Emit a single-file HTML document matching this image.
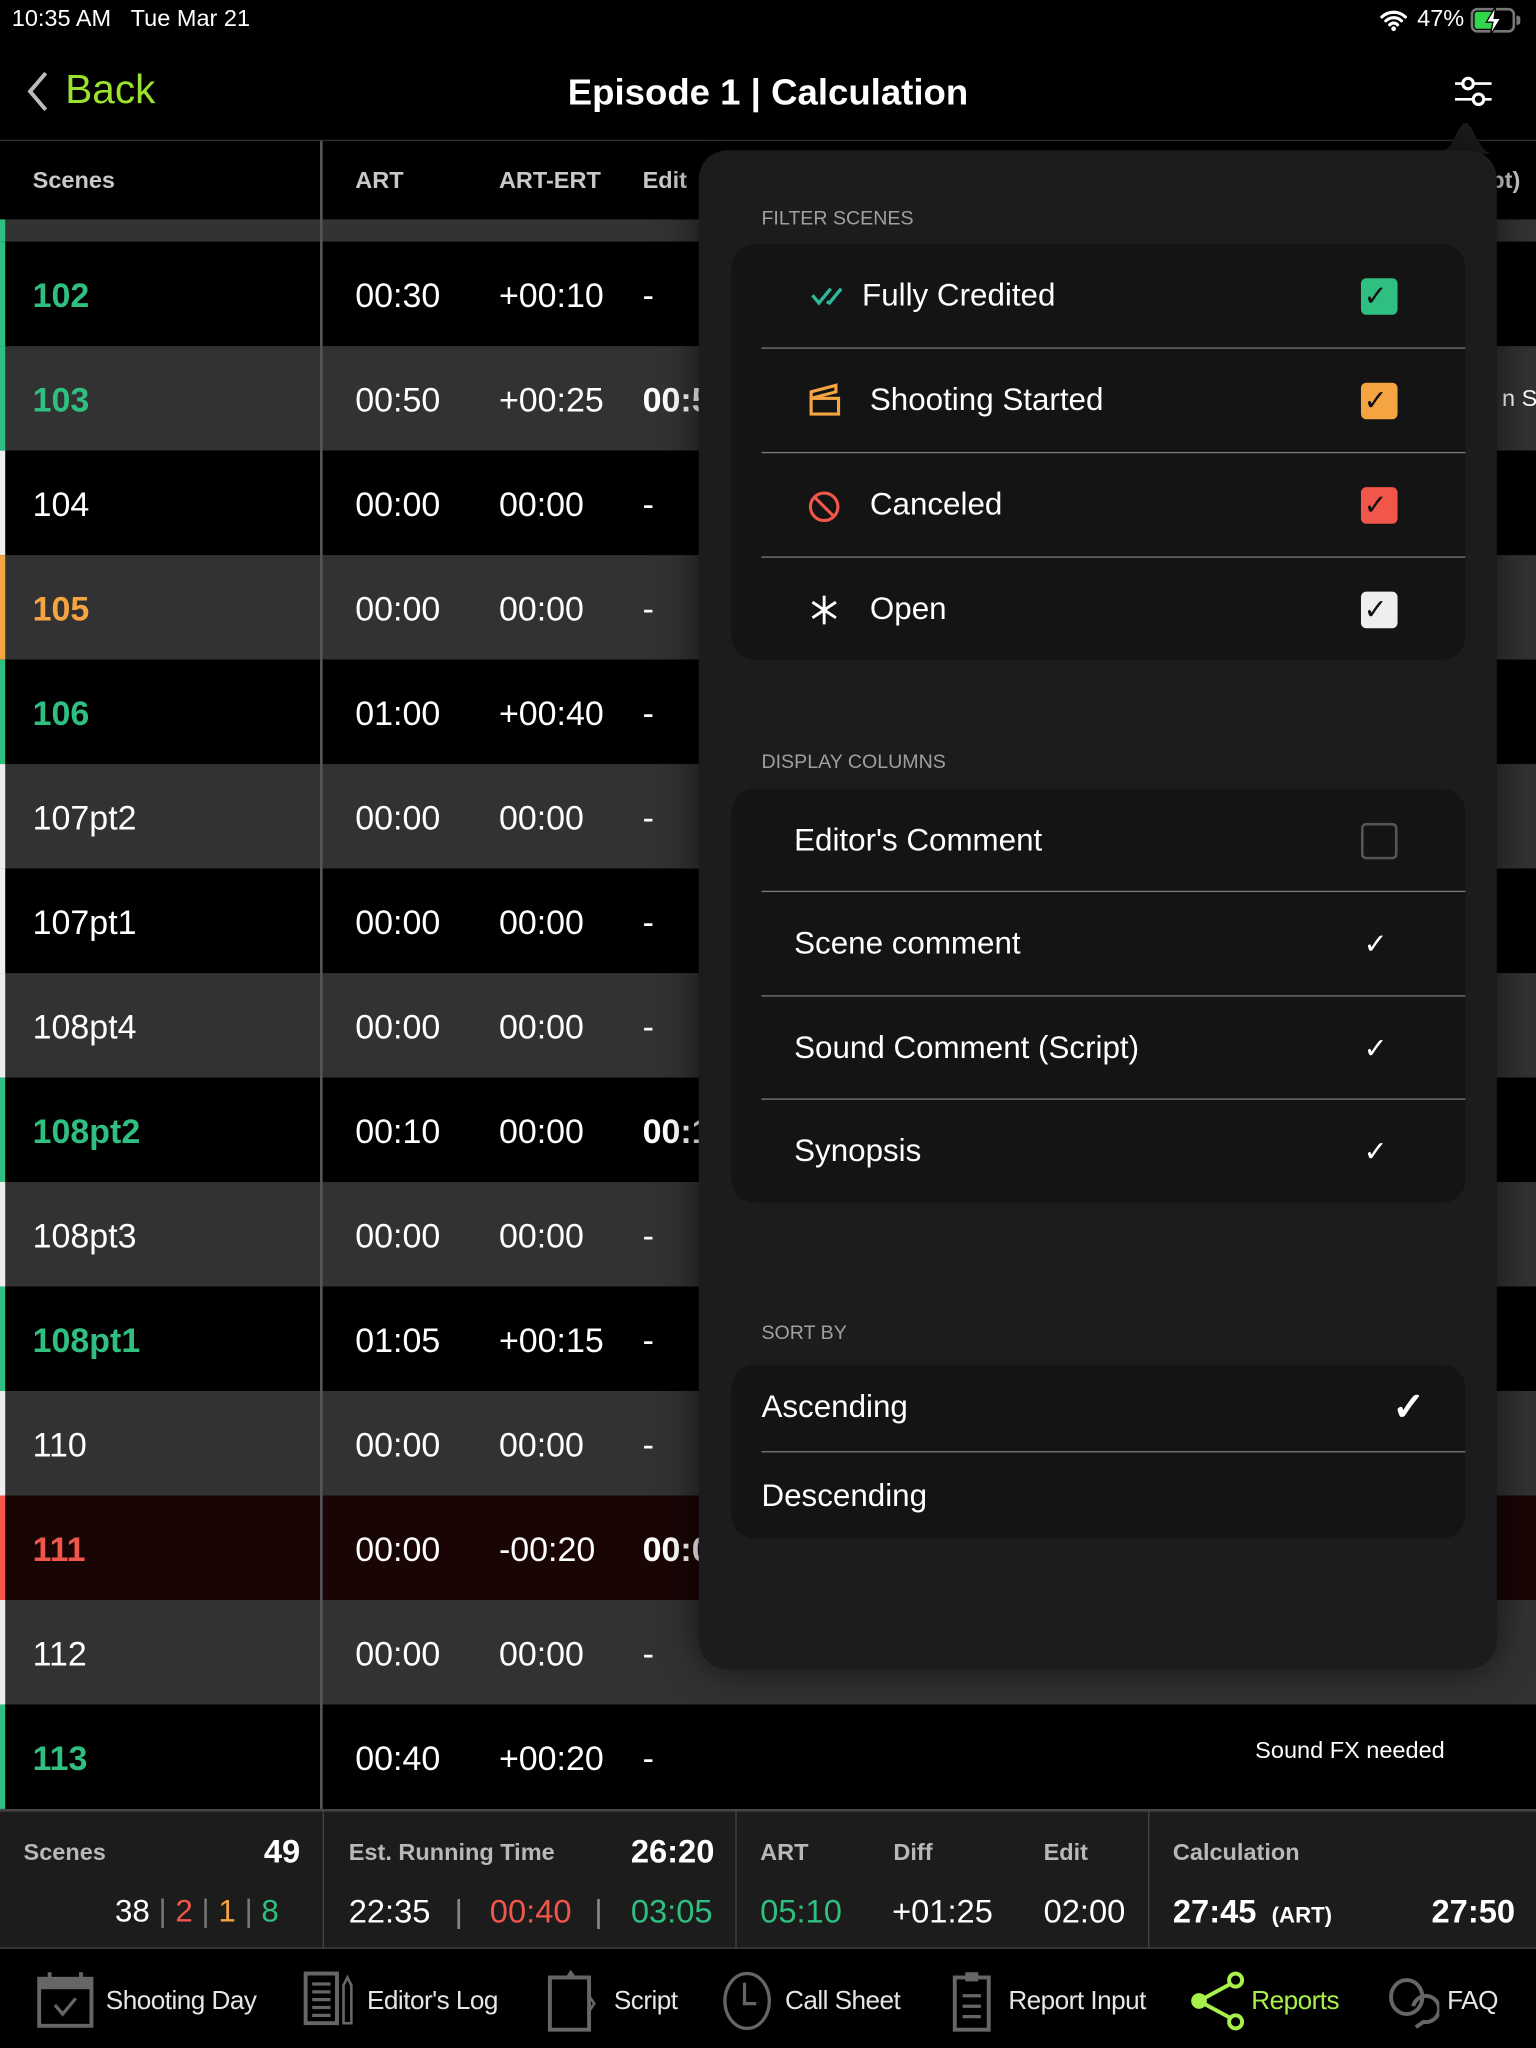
<!DOCTYPE html>
<html><head><meta charset="utf-8"><style>
*{margin:0;padding:0;box-sizing:border-box}
html,body{width:1536px;height:2048px;background:#000;overflow:hidden;font-family:"Liberation Sans",sans-serif;color:#fff}
#w{position:absolute;left:0;top:0;width:1176px;height:1568px;transform:scale(1.306122);transform-origin:0 0;overflow:hidden;background:#000}
.a{position:absolute;white-space:nowrap}
.row{position:absolute;left:0;width:1176px;height:80px}
.row .t{position:absolute;top:0;line-height:82px;font-size:26px}
.hd{font-size:18px;font-weight:bold;color:#c8c8c8;line-height:60px;top:108px}
.pop{position:absolute;left:535px;top:115px;width:611px;height:1163px;background:#1c1c1e;border-radius:22px;box-shadow:0 0 30px rgba(0,0,0,.6)}
.card{position:absolute;left:25px;width:562px;background:#141414;border-radius:18px}
.sec{position:absolute;left:48px;font-size:15px;color:#a0a0a0}
.it{position:absolute;left:0;width:562px;height:80px}
.it .l{position:absolute;font-size:24px;line-height:80px;top:0}
.sep{position:absolute;left:23px;right:0;height:1px;background:#7a7a7a}
.cb{position:absolute;left:482px;top:26px;width:28px;height:28px;border-radius:4px}
.ck{position:absolute;left:484px;top:0;line-height:80px;font-size:22px;color:#fff}
.sl{position:absolute;font-size:18px;font-weight:bold;color:#b8b8b8;top:1408px}
.sv{position:absolute;font-size:25px;top:1450px}
.tab{position:absolute;top:1515px;font-size:20px;letter-spacing:-0.4px;color:#e6e6e6;line-height:34px}
</style></head><body><div id="w">

<!-- status bar -->
<div class="a" style="left:9px;top:4px;font-size:18px">10:35 AM&nbsp;&nbsp;&nbsp;Tue Mar 21</div>
<svg class="a" style="left:1056px;top:6px" width="22" height="18" viewBox="0 0 22 18"><path d="M2 7a13 13 0 0 1 18 0M5 10a8.5 8.5 0 0 1 12 0M8 13a4 4 0 0 1 6 0" stroke="#fff" stroke-width="2.4" fill="none" stroke-linecap="round"/><circle cx="11" cy="16" r="1.8" fill="#fff"/></svg>
<div class="a" style="left:1085px;top:4px;font-size:18px">47%</div>
<div class="a" style="left:1126px;top:6px;width:34px;height:19px;border:2px solid #777;border-radius:5px"></div>
<div class="a" style="left:1129px;top:9px;width:14px;height:13px;background:#32d74b;border-radius:2px"></div>
<div class="a" style="left:1161px;top:12px;width:3px;height:7px;background:#777;border-radius:0 2px 2px 0"></div>
<svg class="a" style="left:1135px;top:4px" width="16" height="24" viewBox="0 0 16 24"><path d="M10 1 3 13h5l-2 10 8-13H9z" fill="#fff" stroke="#000" stroke-width="1"/></svg>

<!-- nav -->
<svg class="a" style="left:18px;top:53px" width="22" height="34" viewBox="0 0 22 34"><path d="M17 3 5 17l12 14" stroke="#bbb" stroke-width="3" fill="none"/></svg>
<div class="a" style="left:50px;top:51px;font-size:31px;color:#9be22e">Back</div>
<div class="a" style="left:0;width:1176px;text-align:center;top:55px;font-size:28px;font-weight:bold">Episode 1 | Calculation</div>
<svg class="a" style="left:1112px;top:57px" width="32" height="26" viewBox="0 0 32 26"><path d="M2 7h28M2 19h28" stroke="#fff" stroke-width="2"/><circle cx="12" cy="7" r="4" fill="#000" stroke="#fff" stroke-width="2.4"/><circle cx="20" cy="19" r="4" fill="#000" stroke="#fff" stroke-width="2.4"/></svg>
<div class="a" style="left:0;top:107px;width:1176px;height:1px;background:#333"></div>

<!-- table header -->
<div class="a hd" style="left:25px">Scenes</div>
<div class="a hd" style="left:272px">ART</div>
<div class="a hd" style="left:382px">ART-ERT</div>
<div class="a hd" style="left:492px">Edit</div>
<div class="a hd" style="left:1136px">ipt)</div>
<div class="a" style="left:0;top:168px;width:1176px;height:17px;background:#333"></div>
<div class="a" style="left:0;top:168px;width:4px;height:17px;background:#2fbf80"></div>

<div id="rows"></div>

<div class="a" style="left:245px;top:108px;width:2px;height:1277px;background:#555"></div>
<div class="a" style="left:961px;top:1300px;font-size:18px;line-height:80px">Sound FX needed</div>
<div class="a" style="left:1150px;top:265px;font-size:18px;line-height:80px">n SD</div>

<!-- summary -->
<div class="a" style="left:0;top:1385px;width:1176px;height:107px;background:#1c1c1c;border-top:2px solid #444;border-bottom:1px solid #444"></div>
<div class="a" style="left:247px;top:1386px;width:1px;height:106px;background:#444"></div>
<div class="a" style="left:563px;top:1386px;width:1px;height:106px;background:#444"></div>
<div class="a" style="left:879px;top:1386px;width:1px;height:106px;background:#444"></div>
<div class="sl" style="left:18px">Scenes</div>
<div class="sv" style="left:202px;top:1404px;font-weight:bold">49</div>
<div class="sv" style="left:88px;font-size:24px">38 <span style="color:#777">|</span> <span style="color:#f0564a">2</span> <span style="color:#777">|</span> <span style="color:#f5a442">1</span> <span style="color:#777">|</span> <span style="color:#2fbf80">8</span></div>
<div class="sl" style="left:267px">Est. Running Time</div>
<div class="sv" style="left:483px;top:1404px;font-weight:bold">26:20</div>
<div class="sv" style="left:267px">22:35</div>
<div class="sv" style="left:348px;color:#888">|</div>
<div class="sv" style="left:375px;color:#f0564a">00:40</div>
<div class="sv" style="left:455px;color:#888">|</div>
<div class="sv" style="left:483px;color:#2fbf80">03:05</div>
<div class="sl" style="left:582px">ART</div>
<div class="sl" style="left:684px">Diff</div>
<div class="sl" style="left:799px">Edit</div>
<div class="sv" style="left:582px;color:#2fbf80">05:10</div>
<div class="sv" style="left:683px">+01:25</div>
<div class="sv" style="left:799px">02:00</div>
<div class="sl" style="left:898px">Calculation</div>
<div class="sv" style="left:898px;font-weight:bold">27:45 <span style="font-size:17px">&nbsp;(ART)</span></div>
<div class="sv" style="left:1096px;font-weight:bold">27:50</div>

<!-- tab bar -->
<svg class="a" style="left:28px;top:1508px" width="46" height="46" viewBox="0 0 46 46"><rect x="2" y="7" width="40" height="36" fill="none" stroke="#666" stroke-width="3"/><rect x="2" y="7" width="40" height="8" fill="#666"/><path d="M10 2v8M34 2v8" stroke="#666" stroke-width="3"/><path d="M14 27l6 7 10-12" stroke="#666" stroke-width="2.5" fill="none"/></svg>
<div class="tab" style="left:81px">Shooting Day</div>
<svg class="a" style="left:232px;top:1508px" width="42" height="46" viewBox="0 0 42 46"><rect x="2" y="3" width="24" height="38" fill="none" stroke="#666" stroke-width="3"/><path d="M7 11h14M7 17h14M7 23h14M7 29h14M7 35h14" stroke="#666" stroke-width="2.5"/><path d="M31 12l3-6 3 6v29h-6z" fill="none" stroke="#666" stroke-width="2"/></svg>
<div class="tab" style="left:281px">Editor's Log</div>
<svg class="a" style="left:418px;top:1506px" width="40" height="50" viewBox="0 0 40 50"><rect x="3" y="8" width="30" height="40" fill="none" stroke="#666" stroke-width="3"/><path d="M15 8l4-6 4 6" fill="#666"/><path d="M33 22l4 6-4 6" fill="none" stroke="#666" stroke-width="2"/></svg>
<div class="tab" style="left:470px">Script</div>
<svg class="a" style="left:552px;top:1508px" width="40" height="48" viewBox="0 0 40 48"><ellipse cx="20" cy="24" rx="17" ry="21" fill="none" stroke="#666" stroke-width="2.5"/><path d="M18 10v16h9" stroke="#666" stroke-width="2.5" fill="none"/></svg>
<div class="tab" style="left:601px">Call Sheet</div>
<svg class="a" style="left:728px;top:1508px" width="32" height="48" viewBox="0 0 32 48"><rect x="3" y="6" width="26" height="40" fill="none" stroke="#666" stroke-width="3"/><rect x="11" y="2" width="10" height="7" fill="#666"/><path d="M9 20h14M9 28h14M9 36h14" stroke="#666" stroke-width="2.5"/></svg>
<div class="tab" style="left:772px">Report Input</div>
<svg class="a" style="left:910px;top:1508px" width="44" height="48" viewBox="0 0 44 48"><circle cx="8" cy="24" r="6" fill="#a8f04a"/><circle cx="36" cy="8" r="5" fill="none" stroke="#a8f04a" stroke-width="3"/><circle cx="36" cy="40" r="5" fill="none" stroke="#a8f04a" stroke-width="3"/><path d="M8 24 32 11M8 24l24 13" stroke="#a8f04a" stroke-width="3"/></svg>
<div class="tab" style="left:958px;color:#a8f04a">Reports</div>
<svg class="a" style="left:1062px;top:1512px" width="40" height="42" viewBox="0 0 40 42"><ellipse cx="15" cy="17" rx="12" ry="13" fill="none" stroke="#666" stroke-width="3"/><path d="M20 24a10 10 0 1 1 8 12l-6 4" fill="none" stroke="#666" stroke-width="3"/></svg>
<div class="tab" style="left:1108px">FAQ</div>

<!-- popover -->
<svg class="a" style="left:1100px;top:94px" width="44" height="24" viewBox="0 0 44 24"><path d="M0 24C12 24 16 0 22 0S32 24 44 24z" fill="#1c1c1e"/></svg>
<div class="pop">
 <div class="sec" style="top:44px">FILTER SCENES</div>
 <div class="card" style="top:72px;height:318px">
  <div class="it" style="top:0">
   <svg class="a" style="left:60px;top:32px" width="30" height="16" viewBox="0 0 30 16"><path d="M2 7l5 6 9-11M13 12l2 1 9-11" stroke="#2fb89a" stroke-width="2.6" fill="none"/></svg>
   <div class="l" style="left:100px">Fully Credited</div>
   <div class="cb" style="background:#2fbf80"></div><div class="ck" style="color:#111">✓</div>
  </div>
  <div class="sep" style="top:79px"></div>
  <div class="it" style="top:80px">
   <svg class="a" style="left:58px;top:26px" width="26" height="26" viewBox="0 0 26 26"><rect x="3" y="12" width="21" height="12" fill="none" stroke="#f5a442" stroke-width="2.4"/><path d="M3 12V7l19-5v5z" fill="none" stroke="#f5a442" stroke-width="2.4"/></svg>
   <div class="l" style="left:106px">Shooting Started</div>
   <div class="cb" style="background:#f5a442"></div><div class="ck" style="color:#111">✓</div>
  </div>
  <div class="sep" style="top:159px"></div>
  <div class="it" style="top:160px">
   <svg class="a" style="left:58px;top:28px" width="26" height="26" viewBox="0 0 26 26"><circle cx="13" cy="13" r="10.5" fill="none" stroke="#f0564a" stroke-width="2.4"/><path d="M6 6l14 14" stroke="#f0564a" stroke-width="2.4"/></svg>
   <div class="l" style="left:106px">Canceled</div>
   <div class="cb" style="background:#f0564a"></div><div class="ck" style="color:#111">✓</div>
  </div>
  <div class="sep" style="top:239px"></div>
  <div class="it" style="top:240px">
   <svg class="a" style="left:60px;top:28px" width="22" height="24" viewBox="0 0 22 24"><path d="M11 1v22M2 6l18 12M20 6 2 18" stroke="#fff" stroke-width="2.2"/></svg>
   <div class="l" style="left:106px">Open</div>
   <div class="cb" style="background:#eee"></div><div class="ck" style="color:#111">✓</div>
  </div>
 </div>
 <div class="sec" style="top:460px">DISPLAY COLUMNS</div>
 <div class="card" style="top:489px;height:317px">
  <div class="it" style="top:0"><div class="l" style="left:48px">Editor's Comment</div><div class="cb" style="border:2px solid #555"></div></div>
  <div class="sep" style="top:78px"></div>
  <div class="it" style="top:79px"><div class="l" style="left:48px">Scene comment</div><div class="ck">✓</div></div>
  <div class="sep" style="top:158px"></div>
  <div class="it" style="top:159px"><div class="l" style="left:48px">Sound Comment (Script)</div><div class="ck">✓</div></div>
  <div class="sep" style="top:237px"></div>
  <div class="it" style="top:238px"><div class="l" style="left:48px">Synopsis</div><div class="ck">✓</div></div>
 </div>
 <div class="sec" style="top:897px">SORT BY</div>
 <div class="card" style="top:930px;height:133px">
  <div class="it" style="top:-7px;height:80px"><div class="l" style="left:23px">Ascending</div><div class="ck" style="left:506px;font-size:30px;font-weight:bold">✓</div></div>
  <div class="sep" style="top:66px"></div>
  <div class="it" style="top:61px"><div class="l" style="left:23px">Descending</div></div>
 </div>
</div>

<script>
var G='#2fbf80',O='#f5a442',R='#f0564a',W='#fff';
var d=[['102',G,0,'00:30','+00:10','-'],['103',G,1,'00:50','+00:25','00:5'],['104',W,0,'00:00','00:00','-'],['105',O,1,'00:00','00:00','-'],['106',G,0,'01:00','+00:40','-'],['107pt2',W,1,'00:00','00:00','-'],['107pt1',W,0,'00:00','00:00','-'],['108pt4',W,1,'00:00','00:00','-'],['108pt2',G,0,'00:10','00:00','00:1'],['108pt3',W,1,'00:00','00:00','-'],['108pt1',G,0,'01:05','+00:15','-'],['110',W,1,'00:00','00:00','-'],['111',R,2,'00:00','-00:20','00:0'],['112',W,1,'00:00','00:00','-'],['113',G,0,'00:40','+00:20','-']];
var h='';d.forEach(function(r,i){var bg=r[2]==1?'#323232':r[2]==2?'#1a0505':'#000';var bar=r[1]==W?'#eee':r[1];var b=r[1]!=W?'font-weight:bold;':'';
h+='<div class="row" style="top:'+(185+i*80)+'px;background:'+bg+'"><div class="a" style="left:0;top:0;width:4px;height:80px;background:'+bar+'"></div><div class="t" style="left:25px;color:'+r[1]+';'+b+'">'+r[0]+'</div><div class="t" style="left:272px">'+r[3]+'</div><div class="t" style="left:382px">'+r[4]+'</div><div class="t" style="left:492px;'+(r[5]=='-'?'':'font-weight:bold')+'">'+r[5]+'</div></div>';});
document.getElementById('rows').outerHTML=h;
</script>
</div></body></html>
